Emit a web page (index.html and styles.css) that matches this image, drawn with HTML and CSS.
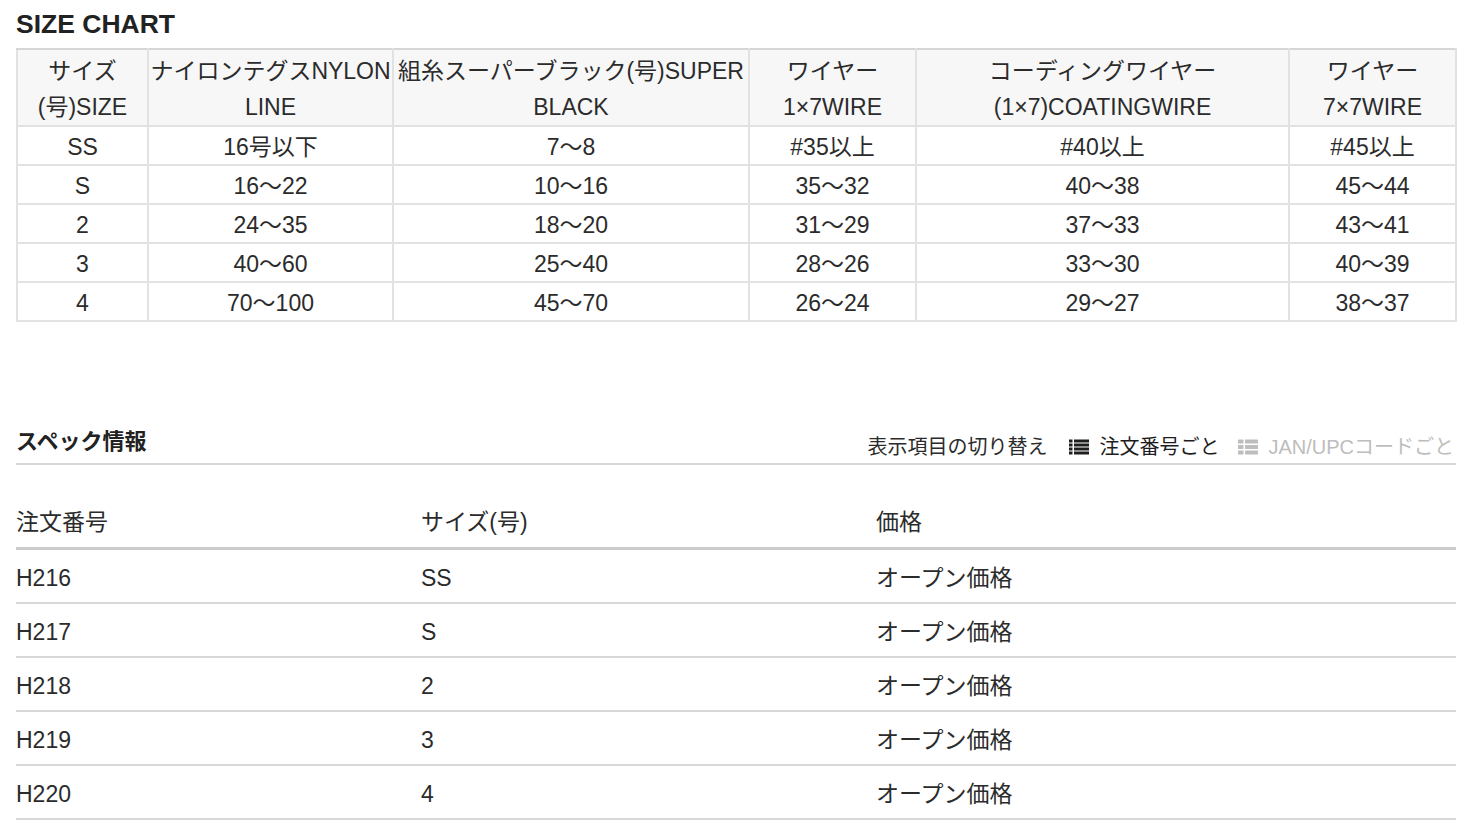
FILE: index.html
```html
<!DOCTYPE html>
<html lang="ja">
<head>
<meta charset="utf-8">
<title>SIZE CHART</title>
<link rel="stylesheet" href="styles.css">
</head>
<body>
<div class="page">
  <h2 class="size-title">SIZE CHART</h2>
  <table class="size-table">
    <colgroup>
      <col class="c1"><col class="c2"><col class="c3"><col class="c4"><col class="c5"><col class="c6">
    </colgroup>
    <thead>
      <tr>
        <th>サイズ<br>(号)SIZE</th>
        <th>ナイロンテグスNYLON<br>LINE</th>
        <th>組糸スーパーブラック(号)SUPER<br>BLACK</th>
        <th>ワイヤー<br>1×7WIRE</th>
        <th>コーディングワイヤー<br>(1×7)COATINGWIRE</th>
        <th>ワイヤー<br>7×7WIRE</th>
      </tr>
    </thead>
    <tbody>
      <tr><td>SS</td><td>16号以下</td><td>7〜8</td><td>#35以上</td><td>#40以上</td><td>#45以上</td></tr>
      <tr><td>S</td><td>16〜22</td><td>10〜16</td><td>35〜32</td><td>40〜38</td><td>45〜44</td></tr>
      <tr><td>2</td><td>24〜35</td><td>18〜20</td><td>31〜29</td><td>37〜33</td><td>43〜41</td></tr>
      <tr><td>3</td><td>40〜60</td><td>25〜40</td><td>28〜26</td><td>33〜30</td><td>40〜39</td></tr>
      <tr><td>4</td><td>70〜100</td><td>45〜70</td><td>26〜24</td><td>29〜27</td><td>38〜37</td></tr>
    </tbody>
  </table>

  <section class="spec">
    <div class="spec-head">
      <h3 class="spec-title">スペック情報</h3>
      <div class="spec-switch">
        <span class="switch-label">表示項目の切り替え</span>
        <span class="switch-opt active">
          <svg class="ico" width="20" height="16" viewBox="0 0 20 16" aria-hidden="true">
            <rect x="0" y="0.5" width="3.5" height="3" fill="currentColor"/>
            <rect x="5" y="0.5" width="15" height="3" fill="currentColor"/>
            <rect x="0" y="4.5" width="3.5" height="3" fill="currentColor"/>
            <rect x="5" y="4.5" width="15" height="3" fill="currentColor"/>
            <rect x="0" y="8.5" width="3.5" height="3" fill="currentColor"/>
            <rect x="5" y="8.5" width="15" height="3" fill="currentColor"/>
            <rect x="0" y="12.5" width="3.5" height="3" fill="currentColor"/>
            <rect x="5" y="12.5" width="15" height="3" fill="currentColor"/>
          </svg>
          注文番号ごと
        </span>
        <span class="switch-opt inactive">
          <svg class="ico" width="20" height="16" viewBox="0 0 20 16" aria-hidden="true">
            <rect x="0" y="0.5" width="5.5" height="4" rx="0.8" fill="currentColor"/>
            <rect x="7" y="0.5" width="13" height="4" rx="0.8" fill="currentColor"/>
            <rect x="0" y="6" width="5.5" height="4" rx="0.8" fill="currentColor"/>
            <rect x="7" y="6" width="13" height="4" rx="0.8" fill="currentColor"/>
            <rect x="0" y="11.5" width="5.5" height="4" rx="0.8" fill="currentColor"/>
            <rect x="7" y="11.5" width="13" height="4" rx="0.8" fill="currentColor"/>
          </svg>
          JAN/UPCコードごと
        </span>
      </div>
    </div>

    <table class="spec-table">
      <colgroup><col class="s1"><col class="s2"><col class="s3"></colgroup>
      <thead>
        <tr><th>注文番号</th><th>サイズ(号)</th><th>価格</th></tr>
      </thead>
      <tbody>
        <tr><td>H216</td><td>SS</td><td>オープン価格</td></tr>
        <tr><td>H217</td><td>S</td><td>オープン価格</td></tr>
        <tr><td>H218</td><td>2</td><td>オープン価格</td></tr>
        <tr><td>H219</td><td>3</td><td>オープン価格</td></tr>
        <tr><td>H220</td><td>4</td><td>オープン価格</td></tr>
      </tbody>
    </table>
  </section>
</div>
</body>
</html>
```

FILE: styles.css
```css
html, body {
  margin: 0;
  padding: 0;
  background: #ffffff;
}

body {
  font-family: "Liberation Sans", "Noto Sans CJK JP", sans-serif;
  color: #2b2b2b;
}

.page {
  padding: 0 16px;
}

.size-title {
  margin: 0;
  padding-top: 6px;
  font-size: 26.5px;
  line-height: 36px;
  font-weight: bold;
  color: #222;
}

.size-table {
  margin-top: 6px;
  width: 1439px;
  table-layout: fixed;
  border-collapse: collapse;
  font-size: 23px;
}

.size-table .c1 { width: 131px; }
.size-table .c2 { width: 245px; }
.size-table .c3 { width: 356px; }
.size-table .c4 { width: 167px; }
.size-table .c5 { width: 373px; }
.size-table .c6 { width: 167px; }

.size-table th,
.size-table td {
  border: 2px solid #e2e2e2;
  text-align: center;
  font-weight: normal;
  white-space: nowrap;
}

.size-table thead th {
  background: #f7f7f7;
  padding: 3px 0 0;
  line-height: 36px;
  border-top-color: #d6d6d6;
}

.size-table td {
  padding: 3px 0 0;
  line-height: 34px;
}

.spec {
  margin-top: 104px;
}

.spec-head {
  display: flex;
  justify-content: space-between;
  align-items: flex-start;
  border-bottom: 2px solid #d8d8d8;
  padding-bottom: 5px;
}

.spec-title {
  margin: 0;
  font-size: 22px;
  line-height: 32px;
  font-weight: bold;
  color: #222;
}

.spec-switch {
  margin-top: 10px;
  padding-right: 2px;
  display: flex;
  align-items: center;
  font-size: 20px;
  line-height: 22px;
}

.switch-label {
  color: #2b2b2b;
  margin-right: 22px;
}

.switch-opt {
  display: flex;
  align-items: center;
}

.switch-opt .ico {
  margin-right: 10px;
}

.switch-opt.active {
  color: #1e1e1e;
  margin-right: 19px;
}

.switch-opt.inactive {
  color: #bdbdbd;
}

.spec-table {
  width: 1440px;
  table-layout: fixed;
  border-collapse: collapse;
  font-size: 23px;
  line-height: 30px;
}

.spec-table .s1 { width: 405px; }
.spec-table .s2 { width: 455px; }
.spec-table .s3 { width: 580px; }

.spec-table th {
  text-align: left;
  font-weight: normal;
  padding: 42px 0 10px;
  border-bottom: 3px solid #cccccc;
}

.spec-table td {
  text-align: left;
  padding: 13px 0 9px;
  border-bottom: 2px solid #d8d8d8;
}
```
